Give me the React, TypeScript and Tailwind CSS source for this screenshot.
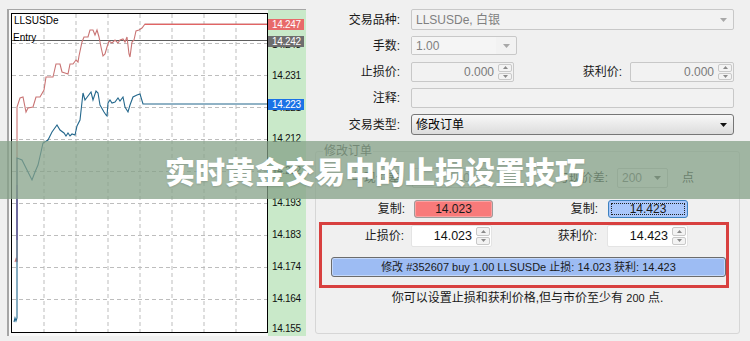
import React from "react";

const redSeries =
  "15,262 16,259 17,262 17,107 20,98 23,97 26,112 28,108 33,107 36,97 40,97 44,90 46,77 53,77 56,64 60,64 62,72 65,73 68,74 70,64 73,64 76,60 78,62 79,56 82,42 84,37 88,37 90,30 93,30 95,35 97,30 99,37 101,47 103,56 105,54 107,47 109,41 112,43 115,40 118,43 120,40 123,39 125,42 127,37 129,54 130,57 132,42 134,40 136,31 139,30 142,28 145,24 267,24";

const blueSeries =
  "14,322 15,318 16,321 17,318 17,158 22,160 27,170 32,180 35,172 38,165 41,152 43,143 48,140 52,132 57,125 60,130 64,133 66,136 68,133 70,136 72,134 75,135 77,126 80,120 83,93 85,100 88,96 91,92 93,100 96,91 98,93 100,105 104,112 106,115 107,116 108,103 110,100 112,103 115,102 118,98 120,101 123,97 125,107 128,112 130,105 133,97 137,95 140,94 143,104 267,104";

const gridX = [44, 76, 108, 140, 172, 204, 236];
const gridY = [43, 75, 107, 139, 171, 203, 235, 267, 299];

const axisLabels = [
  { y: 76, text: "14.231" },
  { y: 139, text: "14.212" },
  { y: 171, text: "14.202" },
  { y: 203, text: "14.193" },
  { y: 235, text: "14.183" },
  { y: 267, text: "14.174" },
  { y: 299, text: "14.164" },
  { y: 329, text: "14.155" },
];

const priceTags = [
  { top: "top-[9px]", bg: "bg-[#e86a6a]", text: "14.247" },
  { top: "top-[26px]", bg: "bg-[#6e6e6e]", text: "14.242" },
  { top: "top-[89px]", bg: "bg-[#1a72e6]", text: "14.223" },
];

function Tri({ down = true, color = "#9a9a9a", w = 7, h = 4 }) {
  return (
    <svg width={w} height={h} viewBox="0 0 7 4" aria-hidden="true">
      <polygon points={down ? "0,0 7,0 3.5,4" : "0,4 7,4 3.5,0"} fill={color} />
    </svg>
  );
}

function Spinner() {
  return (
    <div className="flex w-[14px] flex-col gap-px py-px">
      <div className="flex flex-1 items-center justify-center rounded-[2px] border border-[#c9c9c9] bg-[#f3f3f3]">
        <Tri down={false} color="#8a8a8a" w={5} h={3} />
      </div>
      <div className="flex flex-1 items-center justify-center rounded-[2px] border border-[#c9c9c9] bg-[#f3f3f3]">
        <Tri color="#8a8a8a" w={5} h={3} />
      </div>
    </div>
  );
}

function SpinBox({
  value,
  className,
  active = false,
}: {
  value: string;
  className: string;
  active?: boolean;
}) {
  return (
    <div
      className={`flex rounded-[2px] border pr-px ${
        active ? "border-[#e4e4e4] bg-white text-[#111]" : "border-[#c8c8c8] bg-[#f2f2f2] text-[#7a7a7a]"
      } ${className}`}
    >
      <span className="flex flex-1 items-center justify-end pr-[4px]">{value}</span>
      <Spinner />
    </div>
  );
}

function Chart() {
  return (
    <div className="ml-[7px] mt-[9px] flex h-[327px] w-[299px] shrink-0 border-l-2 border-t border-[#a6a6a6] bg-[#f8f8f8]">
      <div className="pl-[2px] pt-[3px]">
        <div className="relative h-[320px] w-[257px] border border-black bg-white">
          <svg width="255" height="318" viewBox="12 14 255 318" className="block">
            {gridX.map((x) => (
              <line key={x} x1={x} y1={14} x2={x} y2={332} stroke="#bdbdbd" strokeDasharray="4 3" />
            ))}
            {gridY.map((y) => (
              <line key={y} x1={12} y1={y + 0.5} x2={267} y2={y + 0.5} stroke="#bdbdbd" strokeDasharray="4 3" />
            ))}
            <line x1={12} y1={40.5} x2={267} y2={40.5} stroke="#5e5e5e" />
            <polyline points={redSeries} fill="none" stroke="#c97474" strokeWidth="1.1" />
            <polyline points={blueSeries} fill="none" stroke="#23678c" strokeWidth="1.1" />
            <line x1={17} y1={185} x2={17} y2={240} stroke="#6a5d9e" strokeWidth="1.4" />
            <line x1={145} y1={24.5} x2={267} y2={24.5} stroke="#e26464" />
          </svg>
          <span className="absolute left-[2px] top-[1px] text-[10px] leading-[12px] text-black">LLSUSDe</span>
          <span className="absolute left-[1px] top-[18px] text-[10px] leading-[12px] text-black">Entry</span>
        </div>
      </div>
      <div className="relative flex-1 bg-[#c9e9c9] text-[10px] leading-[12px] tracking-[-0.3px] text-[#111]">
        {axisLabels.map((l) => (
          <span key={l.text} className="absolute left-[4px]" style={{ top: l.y - 16 }}>
            {l.text}
          </span>
        ))}
        <span className="absolute left-[4px] top-[29px]">14.243</span>
        <span className="absolute left-[4px] top-[92px]">14.221</span>
        {priceTags.map((t) => (
          <span
            key={t.text}
            className={`absolute left-0 h-[11px] w-[36px] pl-[4px] text-[10px] leading-[11px] text-white ${t.top} ${t.bg}`}
          >
            {t.text}
          </span>
        ))}
      </div>
    </div>
  );
}

function Label({ text, className }: { text: string; className: string }) {
  return <span className={`shrink-0 text-right ${className}`}>{text}</span>;
}

function Dialog() {
  return (
    <div className="flex flex-1 flex-col pt-[9px] text-[12px] leading-[14px] text-[#1a1a1a]">
      <div className="flex h-[21px] items-center">
        <Label text="交易品种:" className="w-[94px]" />
        <div className="ml-[11px] flex h-full w-[323px] items-center justify-between rounded-[2px] border border-[#c8c8c8] bg-[#f2f2f2] pl-[4px] pr-[6px] text-[#808080]">
          <span>LLSUSDe, 白银</span>
          <Tri color="#a8a8a8" />
        </div>
      </div>

      <div className="mt-[6px] flex h-[19px] items-center">
        <Label text="手数:" className="w-[94px]" />
        <div className="ml-[11px] flex h-full w-[106px] rounded-[2px] border border-[#c8c8c8] bg-[#f2f2f2] text-[#808080]">
          <span className="flex flex-1 items-center bg-[#f5f5f5] pl-[4px]">1.00</span>
          <span className="flex w-[20px] items-center justify-center">
            <Tri color="#a8a8a8" />
          </span>
        </div>
      </div>

      <div className="mt-[7px] flex h-[20px] items-center">
        <Label text="止损价:" className="w-[94px]" />
        <SpinBox value="0.000" className="ml-[11px] h-full w-[103px]" />
        <Label text="获利价:" className="w-[108px]" />
        <SpinBox value="0.000" className="ml-[8px] h-full w-[104px]" />
      </div>

      <div className="mt-[6px] flex h-[20px] items-center">
        <Label text="注释:" className="w-[94px]" />
        <div className="ml-[11px] h-full w-[323px] rounded-[2px] border border-[#c8c8c8] bg-[#f2f2f2]" />
      </div>

      <div className="mt-[6px] flex h-[21px] items-center">
        <Label text="交易类型:" className="w-[94px]" />
        <div className="ml-[11px] flex h-full w-[323px] items-center justify-between rounded-[3px] border border-[#767676] bg-gradient-to-b from-[#f8f8f8] to-[#dcdcdc] pl-[4px] pr-[6px] text-black">
          <span>修改订单</span>
          <Tri color="#111" />
        </div>
      </div>

      <div className="relative ml-[9px] mt-[16px] flex h-[183px] w-[425px] flex-col rounded-[3px] border border-[#d6d6d6]">
        <span className="absolute -top-[8px] left-[7px] bg-[#f0f0f0] px-px text-[#444]">修改订单</span>

        <div className="mt-[16px] flex h-[20px] items-center">
          <Label text="与现价差:" className="w-[87px]" />
          <SpinBox value="200" className="ml-[9px] h-full w-[78px]" />
          <Label text="与现价差:" className="w-[118px]" />
          <div className="ml-[9px] flex h-full w-[51px] items-center justify-between rounded-[2px] border border-[#c8c8c8] bg-[#f2f2f2] pl-[4px] pr-[6px] text-[#666]">
            <span>200</span>
            <Tri color="#555" />
          </div>
          <span className="ml-[14px]">点</span>
        </div>

        <div className="mt-[12px] flex h-[18px] items-center">
          <Label text="复制:" className="w-[89px]" />
          <div className="ml-[9px] flex h-full w-[79px] items-center justify-center rounded-[3px] border border-[#9c9c9c] bg-[#f87a7a] text-[#1a1a1a] shadow-[inset_0_0_0_1px_#fca0a0]">
            14.023
          </div>
          <Label text="复制:" className="w-[105px]" />
          <div className="ml-[10px] flex h-full w-[80px] items-center justify-center rounded-[3px] border border-[#3d82c0] bg-[#a9c7fb] p-[2px] text-[#1a1a1a]">
            <span className="flex h-full w-full items-center justify-center border border-dotted border-[#222]">14.423</span>
          </div>
        </div>

        <div className="ml-[3px] mt-[4px] flex h-[66px] w-[410px] flex-col border-[3px] border-[#d8403f]">
          <div className="flex h-[22px] items-center">
            <Label text="止损价:" className="w-[82px]" />
            <SpinBox value="14.023" active className="ml-[7px] h-full w-[81px] text-[12.5px]" />
            <Label text="获利价:" className="w-[105px]" />
            <SpinBox value="14.423" active className="ml-[10px] h-full w-[81px] text-[12.5px]" />
          </div>
          <div className="ml-[9px] mt-[10px] flex h-[20px] w-[395px] items-center justify-center rounded-[3px] border border-[#6c6c6c] bg-[#9dbcf3] text-[11px] text-[#1a1a1a] shadow-[inset_0_0_0_1px_#c4d8fa]">
            修改 #352607 buy 1.00 LLSUSDe 止损: 14.023 获利: 14.423
          </div>
        </div>

        <div className="mt-[3px] text-center">你可以设置止损和获利价格,但与市价至少有 <span className="text-[11px]">200</span> 点.</div>
      </div>
    </div>
  );
}

export default function App() {
  return (
    <div className="relative flex h-[341px] w-[750px] overflow-hidden bg-[#f0f0f0] font-['Liberation_Sans','Noto_Sans_CJK_SC',sans-serif]">
      <Chart />
      <Dialog />
      <div className="absolute inset-x-0 top-[141px] flex h-[58px] items-center justify-center bg-[rgba(132,160,135,0.74)]">
        <span className="font-['Noto_Sans_CJK_SC',sans-serif] text-[30px] font-black leading-none text-white [text-shadow:0_1px_2px_rgba(0,0,0,0.15)]">
          实时黄金交易中的止损设置技巧
        </span>
      </div>
    </div>
  );
}
